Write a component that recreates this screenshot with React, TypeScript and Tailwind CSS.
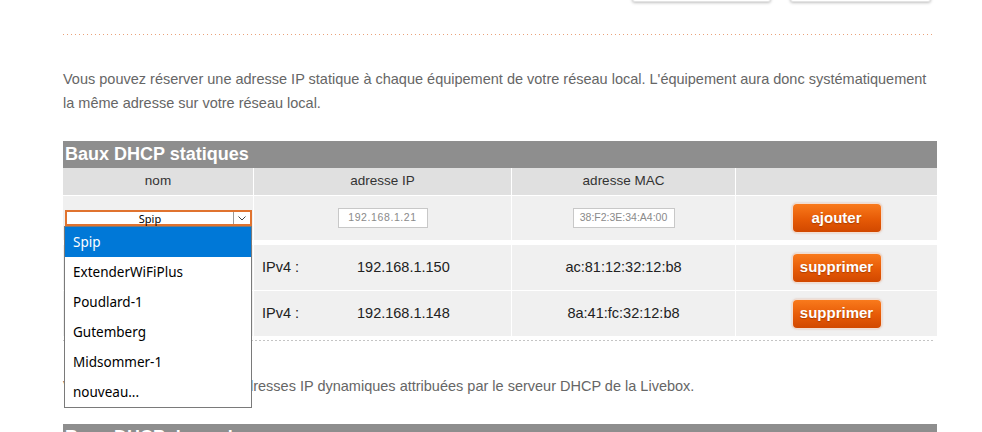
import React from "react";

function OrangeButton({ label }: { label: string }) {
  return (
    <div className="rounded-[5px] p-px bg-[#f3ddd0] shadow-[0_0_2px_rgba(200,120,80,0.5)]">
      <div className="w-[88px] h-[28px] rounded-[4px] bg-[linear-gradient(to_bottom,#f97a1c,#e65a06_55%,#d14800)] flex items-center justify-center text-white font-bold text-[15px] [text-shadow:0_1px_1px_rgba(120,40,0,0.5)]">
        {label}
      </div>
    </div>
  );
}

const options = ["Spip", "ExtenderWiFiPlus", "Poudlard-1", "Gutemberg", "Midsommer-1", "nouveau..."];

export default function App() {
  return (
    <div
      className="relative w-[982px] h-[432px] overflow-hidden bg-white text-[#222]"
      style={{ fontFamily: '"Liberation Sans", Arial, sans-serif' }}
    >
      {/* top buttons bottoms */}
      <div className="flex h-[3px] pl-[632px] gap-[19px]">
        <div className="w-[139px] h-[22px] -mt-[20px] bg-white border border-[#e3e3e3] rounded-[3px] shadow-[0_1px_3px_rgba(0,0,0,0.25)]" />
        <div className="w-[141px] h-[22px] -mt-[20px] bg-white border border-[#e3e3e3] rounded-[3px] shadow-[0_1px_3px_rgba(0,0,0,0.25)]" />
      </div>

      {/* orange dotted separator */}
      <div className="ml-[63px] mt-[31px] w-[870px] h-px bg-[linear-gradient(to_right,#eaa27a_1px,transparent_1px)] bg-[length:4px_1px]" />

      <p className="ml-[63px] mt-[32px] w-[880px] text-[14.5px] leading-[24px] text-[#666]">
        Vous pouvez réserver une adresse IP statique à chaque équipement de votre réseau local. L'équipement aura donc systématiquement
        <br />
        la même adresse sur votre réseau local.
      </p>

      {/* table */}
      <div className="ml-[63px] mt-[26px] w-[874px]">
        <div className="h-[27px] bg-[#8e8e8e] text-white font-bold text-[18px] leading-[27px] pl-[2px]">
          Baux DHCP statiques
        </div>
        <div className="grid grid-cols-[190px_257px_223px_201px] gap-px bg-white">
          {/* header row */}
          <div className="h-[27px] bg-[#e0e0e0] flex items-center justify-center text-[13.5px] text-[#333]">nom</div>
          <div className="h-[27px] bg-[#e0e0e0] flex items-center justify-center text-[13.5px] text-[#333]">adresse IP</div>
          <div className="h-[27px] bg-[#e0e0e0] flex items-center justify-center text-[13.5px] text-[#333]">adresse MAC</div>
          <div className="h-[27px] bg-[#e0e0e0]" />

          {/* input row */}
          <div className="h-[44px] bg-[#f0f0f0] relative flex items-center">
            <div className="ml-[2px] w-[187px] h-[16px] border-2 border-[#e0732f] bg-white flex items-stretch">
              <div
                className="flex-1 flex items-center justify-center text-[11px] leading-none text-black"
                style={{ fontFamily: '"Noto Sans", sans-serif' }}
              >
                Spip
              </div>
              <div className="w-[17px] border-l border-[#9a9a9a] flex items-center justify-center">
                <svg width="8" height="5" viewBox="0 0 8 5">
                  <path d="M0.5 0.5 L4 4 L7.5 0.5" fill="none" stroke="#444" strokeWidth="1" />
                </svg>
              </div>
            </div>
            {/* open dropdown list */}
            <div
              className="absolute left-[1px] top-[30px] w-[188px] bg-white border border-[#7a7a7a] z-10 text-[13.5px] text-black"
              style={{ fontFamily: '"Noto Sans", sans-serif' }}
            >
              {options.map((o, i) => (
                <div
                  key={o}
                  className={
                    i === 0
                      ? "h-[30px] pl-[8px] flex items-center bg-[#0078d7] text-white"
                      : "h-[30px] pl-[8px] flex items-center"
                  }
                >
                  {o}
                </div>
              ))}
            </div>
          </div>
          <div className="h-[44px] bg-[#f0f0f0] flex items-center justify-center">
            <div className="w-[90px] h-[20px] bg-white border border-[#c8c8c8] flex items-center justify-center text-[10.5px] tracking-[0.6px] text-[#8a8a8a]">
              192.168.1.21
            </div>
          </div>
          <div className="h-[44px] bg-[#f0f0f0] flex items-center justify-center">
            <div className="w-[102px] h-[20px] bg-white border border-[#c8c8c8] flex items-center justify-center text-[10.5px] text-[#8a8a8a]">
              38:F2:3E:34:A4:00
            </div>
          </div>
          <div className="h-[44px] bg-[#f0f0f0] flex items-center justify-center">
            <OrangeButton label="ajouter" />
          </div>
        </div>

        <div className="grid grid-cols-[190px_257px_223px_201px] gap-px bg-white mt-[5px]">
          {[
            ["192.168.1.150", "ac:81:12:32:12:b8"],
            ["192.168.1.148", "8a:41:fc:32:12:b8"],
          ].map(([ip, mac]) => (
            <React.Fragment key={ip}>
              <div className="h-[45px] bg-[#f0f0f0]" />
              <div className="h-[45px] bg-[#f0f0f0] flex items-center pl-[8px] text-[14.5px]">
                <span className="w-[95px]">IPv4 :</span>
                <span>{ip}</span>
              </div>
              <div className="h-[45px] bg-[#f0f0f0] flex items-center justify-center text-[14.5px]">{mac}</div>
              <div className="h-[45px] bg-[#f0f0f0] flex items-center justify-center">
                <OrangeButton label="supprimer" />
              </div>
            </React.Fragment>
          ))}
        </div>
      </div>

      {/* gray dotted separator */}
      <div className="ml-[63px] mt-[4px] w-[870px] h-px bg-[linear-gradient(to_right,#c4c4c4_2px,transparent_2px)] bg-[length:4px_1px]" />

      <p className="ml-[63px] mt-[33px] text-[14.5px] leading-[24px] text-[#666]">
        Vous pouvez visualiser les adresses IP dynamiques attribuées par le serveur DHCP de la Livebox.
      </p>

      <div className="ml-[63px] mt-[26px] w-[874px] h-[27px] bg-[#8e8e8e] text-white font-bold text-[18px] leading-[27px] pl-[2px]">
        Baux DHCP dynamiques
      </div>
    </div>
  );
}
